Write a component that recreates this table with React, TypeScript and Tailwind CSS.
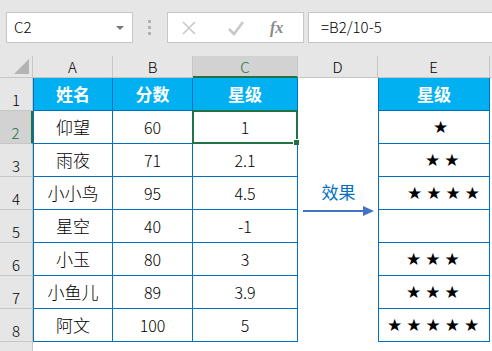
import React from 'react';

type Row = {
  name: string;
  score: string;
  level: string;
  stars: number;
  starPad: string;
};

const rows: Row[] = [
  { name: '仰望', score: '60', level: '1', stars: 1, starPad: 'pl-[54px]' },
  { name: '雨夜', score: '71', level: '2.1', stars: 2, starPad: 'pl-[46px]' },
  { name: '小小鸟', score: '95', level: '4.5', stars: 4, starPad: 'pl-[28px]' },
  { name: '星空', score: '40', level: '-1', stars: 0, starPad: 'pl-0' },
  { name: '小玉', score: '80', level: '3', stars: 3, starPad: 'pl-[27px]' },
  { name: '小鱼儿', score: '89', level: '3.9', stars: 3, starPad: 'pl-[27px]' },
  { name: '阿文', score: '100', level: '5', stars: 5, starPad: 'pl-[8px]' },
];

const cols = 'grid grid-cols-[33px_80px_80px_105px_80px_112px_1fr]';
const font = "font-['Noto_Sans_CJK_SC','Noto_Sans',sans-serif]";
const blue = 'border-[#0070c0]';

const Stars = ({ n, pad }: { n: number; pad: string }) => (
  <div className={`flex h-full items-center gap-[4px] ${pad}`}>
    {Array.from({ length: n }).map((_, i) => (
      <span key={i} className="font-['DejaVu_Sans',sans-serif] text-[17px] leading-none text-black">
        ★
      </span>
    ))}
  </div>
);

const Toolbar = () => (
  <div className="flex h-[56px] items-start bg-[#e6e6e6] pt-[12px]">
    {/* name box */}
    <div className="ml-[6px] flex h-[31px] w-[127px] items-center justify-between border border-[#c6c6c6] bg-white pl-[7px] pr-[8px]">
      <span className={`${font} text-[15px] font-light text-black`}>C2</span>
      <span className="h-0 w-0 border-x-[4px] border-t-[4px] border-x-transparent border-t-[#777]" />
    </div>
    <div className="ml-[15px] flex h-[31px] flex-col items-center justify-center gap-[3px]">
      <span className="h-[3px] w-[3px] bg-[#b3b3b3]" />
      <span className="h-[3px] w-[3px] bg-[#b3b3b3]" />
      <span className="h-[3px] w-[3px] bg-[#b3b3b3]" />
    </div>
    {/* cancel / enter / fx */}
    <div className="ml-[16px] flex h-[31px] w-[137px] items-center border border-[#c6c6c6] bg-white">
      <svg className="ml-[13px]" width="16" height="16" viewBox="0 0 16 16">
        <path d="M2 2 L14 14 M14 2 L2 14" stroke="#c8c8c8" strokeWidth="1.6" fill="none" />
      </svg>
      <svg className="ml-[30px]" width="18" height="16" viewBox="0 0 18 16">
        <path d="M2 9 L7 14 L16 2" stroke="#c8c8c8" strokeWidth="2.6" fill="none" />
      </svg>
      <span className="ml-[25px] font-['Liberation_Serif',serif] text-[16px] font-bold italic text-[#8a8a8a]">
        fx
      </span>
    </div>
    <div className="ml-[4px] flex h-[31px] flex-1 items-center border border-r-0 border-[#c6c6c6] bg-white pl-[12px]">
      <span className={`${font} text-[15px] font-light text-black`}>=B2/10-5</span>
    </div>
  </div>
);

const ColumnHeaders = () => (
  <div className={`${cols} h-[22px] bg-[#e6e6e6] ${font} text-[15px] font-light text-black`}>
    <div className="flex items-end justify-end border-r border-b border-[#c6c6c6] pb-[3px] pr-[3px]">
      <span className="h-0 w-0 border-b-[15px] border-l-[15px] border-b-[#b4b4b4] border-l-transparent" />
    </div>
    {['A', 'B'].map((c) => (
      <div key={c} className="flex items-center justify-center border-r border-b border-[#c6c6c6] leading-none">
        {c}
      </div>
    ))}
    <div className="flex items-center justify-center border-r border-b-2 border-r-[#c6c6c6] border-b-[#217346] bg-[#d2d2d2] leading-none text-[#217346]">
      C
    </div>
    {['D', 'E'].map((c) => (
      <div key={c} className="flex items-center justify-center border-r border-b border-[#c6c6c6] leading-none">
        {c}
      </div>
    ))}
    <div className="border-b border-[#c6c6c6]" />
  </div>
);

const RowHeader = ({ n, active }: { n: number; active?: boolean }) => (
  <div
    className={`flex items-end justify-center pb-[3px] ${font} text-[15px] font-light leading-none ${
      active
        ? 'border-r-2 border-b border-r-[#217346] border-b-[#c6c6c6] bg-[#d2d2d2] text-[#217346]'
        : 'border-r border-b border-[#c6c6c6] bg-[#e6e6e6] text-black'
    }`}
  >
    {n}
  </div>
);

export default function App() {
  return (
    <div className="h-[351px] w-[492px] overflow-hidden bg-white">
      <Toolbar />
      <ColumnHeaders />

      {/* header row */}
      <div className={`${cols} h-[33px]`}>
        <RowHeader n={1} />
        {['姓名', '分数', '星级'].map((t, i) => (
          <div
            key={t}
            className={`flex items-center justify-center border-r border-b ${blue} bg-[#00b0f0] ${font} text-[17px] font-bold text-white ${
              i === 0 ? 'border-l' : ''
            }`}
          >
            {t}
          </div>
        ))}
        <div />
        <div className={`flex items-center justify-center border-x border-b ${blue} bg-[#00b0f0] ${font} text-[17px] font-bold text-white`}>
          星级
        </div>
        <div />
      </div>

      {rows.map((r, idx) => (
        <div key={r.name} className={`${cols} h-[33px]`}>
          <RowHeader n={idx + 2} active={idx === 0} />
          <div className={`flex items-center justify-center border-x border-b ${blue} ${font} text-[17px] font-light text-black`}>
            {r.name}
          </div>
          <div className={`flex items-center justify-center border-r border-b ${blue} ${font} text-[16px] font-light text-black`}>
            {r.score}
          </div>
          <div className={`relative flex items-center justify-center border-r border-b ${blue} ${font} text-[16px] font-light text-black`}>
            {r.level}
            {idx === 0 && (
              <>
                <div className="absolute -top-[1px] -left-[1px] -right-[1px] -bottom-[1px] border-2 border-[#217346]" />
                <div className="absolute -right-[3px] -bottom-[3px] h-[5px] w-[5px] border border-white bg-[#217346] box-content" />
              </>
            )}
          </div>
          <div className="relative">
            {idx === 2 && (
              <div className="absolute left-[5px] right-[4px] bottom-[-6px] flex flex-col items-center">
                <span className={`${font} text-[17px] leading-none text-[#0070c0]`}>效果</span>
                <div className="mt-[6px] flex w-full items-center">
                  <div className="h-[1.5px] flex-1 bg-[#4472c4]" />
                  <span className="h-0 w-0 border-y-[5px] border-l-[11px] border-y-transparent border-l-[#4472c4]" />
                </div>
              </div>
            )}
          </div>
          <div className={`border-x border-b ${blue}`}>
            <Stars n={r.stars} pad={r.starPad} />
          </div>
          <div />
        </div>
      ))}

      <div className={`${cols} h-[20px]`}>
        <div className="border-r border-[#c6c6c6] bg-[#e6e6e6]" />
      </div>
    </div>
  );
}
